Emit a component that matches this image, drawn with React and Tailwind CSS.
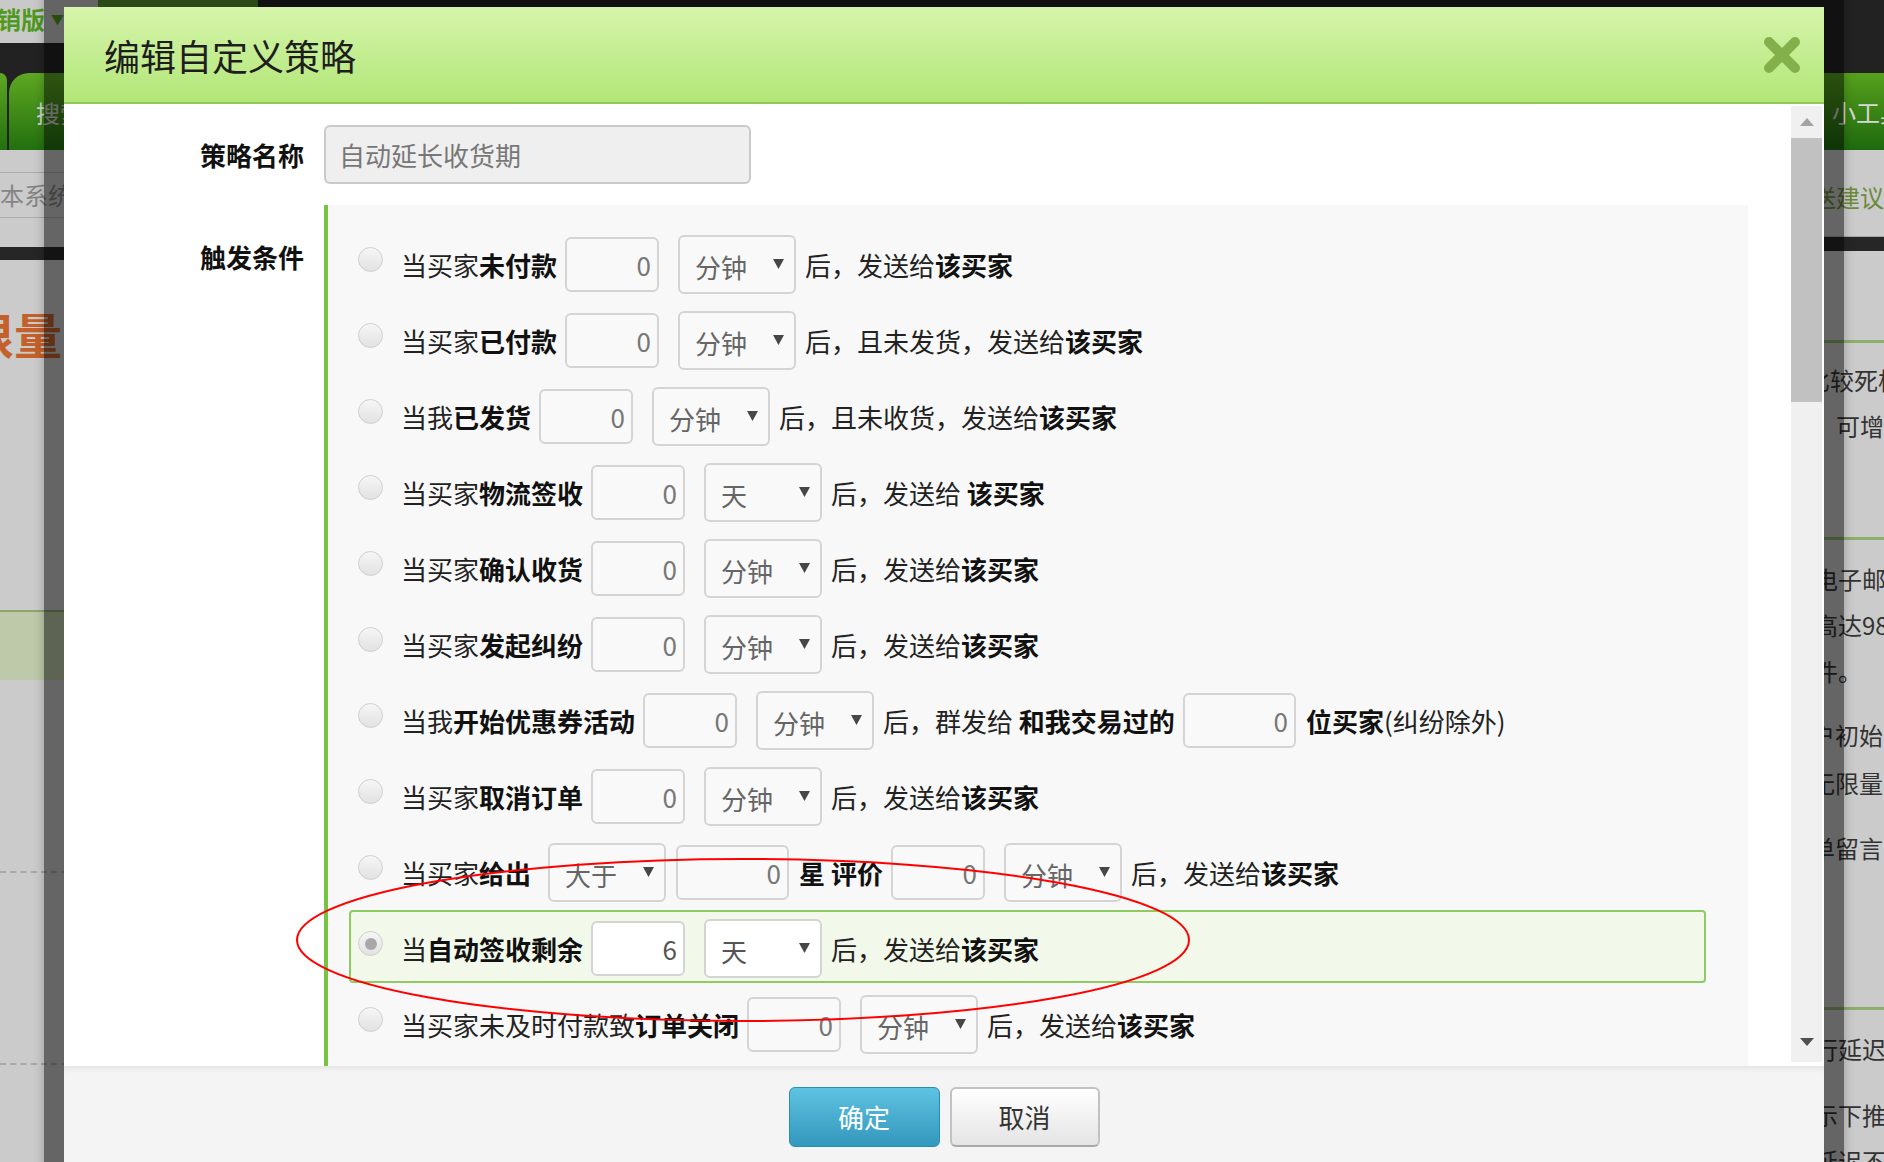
const FONT = "font-['Noto_Sans_CJK_SC','Noto_Sans',sans-serif]";

const rows = [
  [{ k: "t", s: [["当买家", 0], ["未付款", 1]] }, { k: "in", v: "0" }, { k: "sel", v: "分钟" }, { k: "t", s: [["后，发送给", 0], ["该买家", 1]] }],
  [{ k: "t", s: [["当买家", 0], ["已付款", 1]] }, { k: "in", v: "0" }, { k: "sel", v: "分钟" }, { k: "t", s: [["后，且未发货，发送给", 0], ["该买家", 1]] }],
  [{ k: "t", s: [["当我", 0], ["已发货", 1]] }, { k: "in", v: "0" }, { k: "sel", v: "分钟" }, { k: "t", s: [["后，且未收货，发送给", 0], ["该买家", 1]] }],
  [{ k: "t", s: [["当买家", 0], ["物流签收", 1]] }, { k: "in", v: "0" }, { k: "sel", v: "天" }, { k: "t", s: [["后，发送给 ", 0], ["该买家", 1]] }],
  [{ k: "t", s: [["当买家", 0], ["确认收货", 1]] }, { k: "in", v: "0" }, { k: "sel", v: "分钟" }, { k: "t", s: [["后，发送给", 0], ["该买家", 1]] }],
  [{ k: "t", s: [["当买家", 0], ["发起纠纷", 1]] }, { k: "in", v: "0" }, { k: "sel", v: "分钟" }, { k: "t", s: [["后，发送给", 0], ["该买家", 1]] }],
  [
    { k: "t", s: [["当我", 0], ["开始优惠券活动", 1]] },
    { k: "in", v: "0" },
    { k: "sel", v: "分钟" },
    { k: "t", s: [["后，群发给 ", 0], ["和我交易过的", 1]] },
    { k: "in", v: "0", wide: true },
    { k: "t", s: [["位买家", 1], ["(纠纷除外)", 0]] },
  ],
  [{ k: "t", s: [["当买家", 0], ["取消订单", 1]] }, { k: "in", v: "0" }, { k: "sel", v: "分钟" }, { k: "t", s: [["后，发送给", 0], ["该买家", 1]] }],
  [
    { k: "t", s: [["当买家", 0], ["给出", 1]] },
    { k: "sel", v: "大于" },
    { k: "in", v: "0", wide: true },
    { k: "t", s: [["星 评价", 1]] },
    { k: "in", v: "0" },
    { k: "sel", v: "分钟" },
    { k: "t", s: [["后，发送给", 0], ["该买家", 1]] },
  ],
  [{ k: "t", s: [["当", 0], ["自动签收剩余", 1]] }, { k: "in", v: "6" }, { k: "sel", v: "天" }, { k: "t", s: [["后，发送给", 0], ["该买家", 1]] }],
  [{ k: "t", s: [["当买家未及时付款致", 0], ["订单关闭", 1]] }, { k: "in", v: "0" }, { k: "sel", v: "分钟" }, { k: "t", s: [["后，发送给", 0], ["该买家", 1]] }],
];

// gap before an item, by previous kind -> current kind
const gaps = {
  "t-in": "ml-[8px]",
  "sel-in": "ml-[10px]",
  "in-sel": "ml-[19px]",
  "t-sel": "ml-[17px]",
  "in-t": "ml-[10px]",
  "sel-t": "ml-[9px]",
};

function Radio({ checked }) {
  return (
    <span className="mb-[10px] mr-[18px] flex h-[25px] w-[25px] shrink-0 items-center justify-center rounded-full border border-[#cfcfcf] bg-linear-to-b from-[#f6f6f6] to-[#e2e2e2]">
      {checked && <span className="h-[12px] w-[12px] rounded-full bg-[#a8a8a8]" />}
    </span>
  );
}

function Item({ item, gap, active }) {
  if (item.k === "t") {
    return (
      <span className={`${gap} whitespace-pre text-[26px] leading-none text-[#222]`}>
        {item.s.map(([s, b], i) =>
          b ? (
            <b key={i} className="font-bold text-[#111]">
              {s}
            </b>
          ) : (
            <span key={i}>{s}</span>
          )
        )}
      </span>
    );
  }
  if (item.k === "in") {
    return (
      <div
        className={`${gap} flex h-[55px] shrink-0 items-center justify-end rounded-[6px] border-2 border-[#d4d4d4] pr-[6px] text-[26px] leading-none ${
          item.wide ? "w-[113px]" : "w-[94px]"
        } ${active ? "bg-white text-[#555]" : "bg-[#f9f9f9] text-[#777]"}`}
      >
        {item.v}
      </div>
    );
  }
  return (
    <div
      className={`${gap} flex h-[59px] w-[118px] shrink-0 items-center justify-between rounded-[6px] border-2 border-[#d4d4d4] pl-[15px] pr-[10px] text-[26px] leading-none ${
        active ? "bg-white text-[#555]" : "bg-[#f9f9f9] text-[#666]"
      }`}
    >
      <span className="mt-[5px]">{item.v}</span>
      <svg width="11" height="10" viewBox="0 0 11 10" className="mb-[2px]">
        <polygon points="0,0 11,0 5.5,10" fill="#474747" />
      </svg>
    </div>
  );
}

function Row({ items, active }) {
  return (
    <div
      className={`mb-[3px] flex h-[73px] items-center rounded-[4px] border-2 pl-[7px] pt-[4px] ${
        active ? "border-[#8fcb62] bg-[#f2f9ea]" : "border-transparent"
      }`}
    >
      <Radio checked={active} />
      {items.map((it, i) => (
        <Item key={i} item={it} active={active} gap={i === 0 ? "" : gaps[`${items[i - 1].k}-${it.k}`] || ""} />
      ))}
    </div>
  );
}

function LeftStrip() {
  return (
    <div className="w-[98px] shrink-0 overflow-hidden bg-[#cbcbcb]">
      <div className="flex h-[43px] items-center bg-[#c9c9c9] pb-[6px]">
        <span className="-ml-[3px] whitespace-nowrap text-[24px] font-bold leading-none text-[#4f9a1d]">销版</span>
        <span className="ml-[6px] text-[13px] text-[#4f9a1d]">▼</span>
      </div>
      <div className="h-[30px] bg-[#222]" />
      <div className="flex h-[77px] bg-[#222]">
        <div className="w-[7px] rounded-tr-[18px] bg-linear-to-b from-[#5ea823] to-[#22700f]" />
        <div className="ml-[2px] flex flex-1 items-center rounded-tl-[20px] bg-linear-to-b from-[#5ea823] to-[#22700f] pl-[27px] pt-[2px] text-[24px] text-[#d2d2d2]">
          搜索
        </div>
      </div>
      <div className="h-[22px]" />
      <div className="flex h-[46px] items-center whitespace-nowrap border-y border-[#ababab] text-[24px] leading-none text-[#858585]">
        本系统
      </div>
      <div className="h-[29px]" />
      <div className="h-[13px] bg-[#262626]" />
      <div className="h-[49px]" />
      <div className="-ml-[34px] h-[48px] whitespace-nowrap text-[48px] font-bold leading-none text-[#c4612b]">限量</div>
      <div className="h-[253px]" />
      <div className="h-[70px] border-t-2 border-[#8fa46d] bg-[#bdc9a9]" />
      <div className="h-[191px]" />
      <div className="h-[192px] border-t-2 border-dashed border-[#a9a9a9]" />
      <div className="border-t-2 border-dashed border-[#a9a9a9]" />
    </div>
  );
}

function RightStrip() {
  return (
    <div className="w-[100px] shrink-0 overflow-hidden bg-[#cbcbcb] text-[24px] leading-none text-[#333]">
      <div className="h-[73px] bg-[#222]" />
      <div className="flex h-[77px] items-center whitespace-nowrap bg-linear-to-b from-[#56a11d] to-[#1d6a0f] pl-[48px] pt-[1px] text-[#d8d8d8]">
        小工具
      </div>
      <div className="flex h-[87px] items-center whitespace-nowrap border-b border-[#a8a8a8] pl-[4px] pt-[8px] text-[#6b8a3c]">
        发送建议
      </div>
      <div className="h-[14px] bg-[#262626]" />
      <div className="h-[89px]" />
      <div className="border-t-[3px] border-[#8fae6c]" />
      <div className="mt-[25px] whitespace-nowrap pl-[22px]">比较死板</div>
      <div className="mt-[22px] whitespace-nowrap pl-[52px]">可增加</div>
      <div className="mt-[99px] border-t-[3px] border-[#8fae6c]" />
      <div className="mt-[16px] whitespace-nowrap pl-[30px] leading-[46px]">
        <div>电子邮件</div>
        <div>高达98%</div>
        <div>件。</div>
      </div>
      <div className="mt-[17px] whitespace-nowrap pl-[27px] leading-[48px]">
        <div>户初始</div>
        <div>无限量</div>
      </div>
      <div className="mt-[17px] whitespace-nowrap pl-[27px] leading-[48px]">单留言</div>
      <div className="mt-[135px] border-t-[3px] border-[#8fae6c]" />
      <div className="mt-[16px] whitespace-nowrap pl-[30px] leading-[46px]">
        <div>行延迟</div>
        <div className="mt-[20px]">示下推</div>
        <div>延迟不</div>
      </div>
    </div>
  );
}

function Dialog() {
  return (
    <div className="absolute left-[44px] top-[-13px] h-[1240px] w-[1800px] border-[20px] border-black/50 shadow-[0_0_10px_rgba(0,0,0,0.25)]">
      <div className="flex h-full flex-col bg-white">
        <div className="flex h-[97px] shrink-0 items-center justify-between border-b-2 border-[#8fc95a] bg-linear-to-b from-[#d6f5ab] to-[#b2e677] pl-[40px] pr-[22px]">
          <h1 className="text-[36px] font-normal leading-none text-[#1e1e1e]">编辑自定义策略</h1>
          <svg width="40" height="40" viewBox="0 0 40 40">
            <path d="M7 7 L33 33 M33 7 L7 33" stroke="#84b04b" strokeWidth="10" strokeLinecap="round" />
          </svg>
        </div>

        <div className="flex h-[962px] shrink-0">
          <div className="flex-1 overflow-hidden">
            <div className="mt-[21px] flex items-center">
              <div className="w-[240px] text-right text-[26px] font-bold leading-none text-[#111]">策略名称</div>
              <div className="ml-[20px] flex h-[59px] w-[427px] items-center rounded-[6px] border-2 border-[#cacaca] bg-[#efefef] pl-[13px] text-[26px] leading-none text-[#777]">
                自动延长收货期
              </div>
            </div>
            <div className="mt-[21px] flex">
              <div className="w-[240px] pt-[34px] text-right text-[26px] font-bold leading-[36px] text-[#111]">触发条件</div>
              <div className="ml-[20px] w-[1424px] border-l-4 border-[#76c442] bg-[#f8f8f8] pb-[40px] pl-[21px] pr-[42px] pt-[21px]">
                {rows.map((r, i) => (
                  <Row key={i} items={r} active={i === 9} />
                ))}
              </div>
            </div>
          </div>
          <div className="mb-[4px] mr-[2px] mt-[2px] flex w-[31px] flex-col bg-[#f0f0f0]">
            <div className="flex h-[32px] items-center justify-center">
              <svg width="14" height="8" viewBox="0 0 14 8">
                <polygon points="7,0 14,8 0,8" fill="#a3a3a3" />
              </svg>
            </div>
            <div className="h-[264px] bg-[#c1c1c1]" />
            <div className="flex-1" />
            <div className="flex h-[32px] items-center justify-center pb-[8px]">
              <svg width="14" height="8" viewBox="0 0 14 8">
                <polygon points="0,0 14,0 7,8" fill="#505050" />
              </svg>
            </div>
          </div>
        </div>

        <div className="flex flex-1 justify-center gap-[10px] bg-[#f4f4f4] pt-[21px] shadow-[inset_0_6px_6px_-4px_rgba(0,0,0,0.08)]">
          <button className="flex h-[60px] w-[151px] items-center justify-center rounded-[6px] border border-[#2a8db3] bg-linear-to-b from-[#5ec2e1] to-[#3398bd] text-[26px] leading-none text-white">
            确定
          </button>
          <button className="flex h-[60px] w-[150px] items-center justify-center rounded-[6px] border-2 border-[#c2c2c2] border-b-[#a9a9a9] bg-linear-to-b from-white to-[#e4e4e4] text-[26px] leading-none text-[#333]">
            取消
          </button>
        </div>
      </div>
    </div>
  );
}

export default function App() {
  return (
    <div className={`relative h-[1162px] w-full overflow-hidden bg-[#cbcbcb] ${FONT}`}>
      <div className="flex h-full">
        <LeftStrip />
        <div className="flex h-[43px] flex-1">
          <div className="w-[160px] bg-[#58942a]" />
          <div className="flex-1 bg-[#222]" />
        </div>
        <RightStrip />
      </div>

      <Dialog />

      <svg className="pointer-events-none absolute left-[294px] top-[855px] overflow-visible" width="900" height="170" viewBox="0 0 900 170">
        <ellipse cx="449" cy="85" rx="446" ry="81" fill="none" stroke="#f00" strokeWidth="2" />
      </svg>
    </div>
  );
}
